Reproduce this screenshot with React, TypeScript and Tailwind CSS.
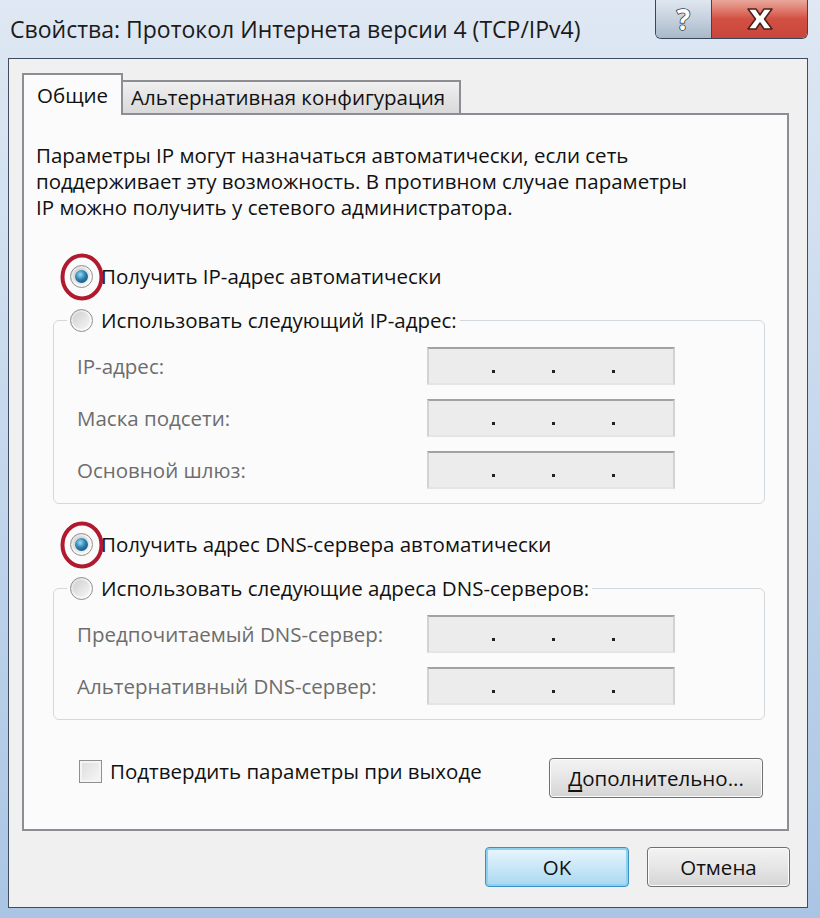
import type { ReactNode } from 'react';

function Radio({ checked, marked }: { checked?: boolean; marked?: boolean }) {
  return (
    <span className="relative inline-flex h-[23px] w-[23px] shrink-0 items-center justify-center rounded-full border border-[#8e8f8f] bg-gradient-to-br from-[#d9d9d9] via-[#f4f4f4] to-[#ffffff]">
      <span className="flex h-[17px] w-[17px] items-center justify-center rounded-full bg-gradient-to-br from-[#cfcfcf] to-[#f7f7f7]">
        {checked && (
          <span className="h-[13px] w-[13px] rounded-full bg-[radial-gradient(circle_at_40%_35%,#9adcf5_0%,#2a7fb0_45%,#0f3f63_100%)]" />
        )}
      </span>
      {marked && (
        <svg
          className="pointer-events-none absolute left-[-11px] top-[-13px] h-[48px] w-[44px]"
          viewBox="0 0 44 48"
          aria-hidden
        >
          <ellipse
            cx="22"
            cy="24"
            rx="19.5"
            ry="21.5"
            fill="none"
            stroke="#b11a2e"
            strokeWidth="4"
          />
        </svg>
      )}
    </span>
  );
}

function IpField() {
  return (
    <div className="flex h-[38px] w-[248px] items-end gap-[57px] border-2 border-t-[#a2a2a2] border-x-[#d2d2d2] border-b-[#e4e4e4] bg-[#ececec] pb-[10px] pl-[63px]">
      <span className="h-[3px] w-[3px] bg-[#222]" />
      <span className="h-[3px] w-[3px] bg-[#222]" />
      <span className="h-[3px] w-[3px] bg-[#222]" />
    </div>
  );
}

function FieldRow({ label }: { label: string }) {
  return (
    <div className="flex items-center">
      <span className="w-[350px] text-[20.5px] leading-[26px] text-[#6d6d6d]">{label}</span>
      <IpField />
    </div>
  );
}

function Group({ legend, children }: { legend: ReactNode; children: ReactNode }) {
  return (
    <fieldset className="ml-[17px] w-[712px] rounded-[6px] border border-[#d3d8dc] pl-[13px] pr-[89px]">
      <legend className="px-[3px]">{legend}</legend>
      <div className="flex flex-col gap-[14px] pb-[14px] pl-[10px] pt-[14px]">{children}</div>
    </fieldset>
  );
}

function RadioLabel({ checked, marked, children }: { checked?: boolean; marked?: boolean; children: ReactNode }) {
  return (
    <div className="flex items-center gap-[8px]">
      <Radio checked={checked} marked={marked} />
      <span className="text-[20.5px] leading-[26px] text-[#111]">{children}</span>
    </div>
  );
}

function Button({ children, primary, className }: { children: ReactNode; primary?: boolean; className?: string }) {
  return (
    <button
      type="button"
      className={
        'flex h-[40px] items-center justify-center rounded-[4px] border text-[20.5px] text-[#111] ' +
        (primary
          ? 'border-[#3c8fc4] bg-gradient-to-b from-[#eaf6fd] via-[#c9e7f7] to-[#a7d8f1] shadow-[inset_0_0_0_2px_#8fd0ef] '
          : 'border-[#707070] bg-gradient-to-b from-[#f3f3f3] via-[#e6e6e6] to-[#d4d4d4] shadow-[inset_0_0_0_1px_#fcfcfc] ') +
        (className ?? '')
      }
    >
      {children}
    </button>
  );
}

export default function App() {
  return (
    <div className="relative h-[918px] w-[820px] overflow-hidden bg-gradient-to-b from-[#dfe8f3] via-[#c4d7ec] to-[#aac5e4] font-['Open_Sans',sans-serif]">
      {/* title bar */}
      <div className="flex h-[58px] items-start justify-between pl-[10px] pr-[12px]">
        <span className="pt-[14px] text-[23px] leading-[30px] text-[#1b1b1b]">
          Свойства: Протокол Интернета версии 4 (TCP/IPv4)
        </span>
        <div className="flex h-[39px] overflow-hidden rounded-b-[6px] border border-t-0 border-[#39475a]">
          <div className="flex w-[56px] items-center justify-center border-r border-[#39475a] bg-gradient-to-b from-[#dfe6ef] via-[#c6d1de] to-[#a9b8ca]">
            <span className="text-[28px] font-bold leading-none text-white [-webkit-text-stroke:1.5px_#2d3440] [paint-order:stroke]">
              ?
            </span>
          </div>
          <div className="flex w-[95px] items-center justify-center bg-gradient-to-b from-[#e9a79c] via-[#d24f43] to-[#c8463b]">
            <svg width="32" height="26" viewBox="0 0 32 26" aria-hidden>
              <path
                d="M4 3 L12 3 L16 9 L20 3 L28 3 L20.5 13 L28 23 L20 23 L16 17 L12 23 L4 23 L11.5 13 Z"
                fill="#fff"
                stroke="#4a1f1a"
                strokeWidth="1.5"
                strokeLinejoin="round"
              />
            </svg>
          </div>
        </div>
      </div>

      {/* client area */}
      <div className="ml-[8px] flex h-[850px] w-[800px] flex-col border border-[#3e4d5f] bg-[#f0f0f0]">
        <div className="pl-[13px] pt-[14px]">
          {/* tabs */}
          <div className="flex items-end">
            <div className="relative z-10 -mb-[2px] flex h-[42px] w-[101px] items-center border-2 border-b-0 border-[#8c8e94] bg-[#fbfbfb] pl-[13px] text-[20.5px] text-[#111]">
              Общие
            </div>
            <div className="flex h-[33px] w-[338px] items-center border-2 border-b-0 border-l-0 border-[#8c8e94] bg-gradient-to-b from-[#f0f0f0] to-[#d9d9d9] pl-[8px] text-[20.5px] text-[#111]">
              Альтернативная конфигурация
            </div>
          </div>

          {/* panel */}
          <div className="flex h-[718px] w-[767px] flex-col border-2 border-[#8c8e94] bg-[#fbfbfb] pl-[12px] pt-[27px]">
            <p className="text-[20.5px] leading-[26px] text-[#111]">
              Параметры IP могут назначаться автоматически, если сеть
              <br />
              поддерживает эту возможность. В противном случае параметры
              <br />
              IP можно получить у сетевого администратора.
            </p>

            <div className="ml-[34px] mt-[43px]">
              <RadioLabel checked marked>
                Получить IP-адрес автоматически
              </RadioLabel>
            </div>

            <div className="mt-[18px]">
              <Group legend={<RadioLabel>Использовать следующий IP-адрес:</RadioLabel>}>
                <FieldRow label="IP-адрес:" />
                <FieldRow label="Маска подсети:" />
                <FieldRow label="Основной шлюз:" />
              </Group>
            </div>

            <div className="ml-[34px] mt-[27px]">
              <RadioLabel checked marked>
                Получить адрес DNS-сервера автоматически
              </RadioLabel>
            </div>

            <div className="mt-[18px]">
              <Group legend={<RadioLabel>Использовать следующие адреса DNS-серверов:</RadioLabel>}>
                <FieldRow label="Предпочитаемый DNS-сервер:" />
                <FieldRow label="Альтернативный DNS-сервер:" />
              </Group>
            </div>

            <div className="mt-[38px] flex items-start justify-between pr-[24px]">
              <div className="ml-[43px] flex items-center gap-[8px]">
                <span className="h-[23px] w-[23px] border border-[#8f8f8f] bg-gradient-to-br from-[#dcdcdc] to-[#f8f8f8] shadow-[inset_0_0_0_2px_#f4f4f4]" />
                <span className="text-[20.5px] leading-[26px] text-[#111]">Подтвердить параметры при выходе</span>
              </div>
              <Button className="w-[214px]">
                <span>
                  <span className="underline underline-offset-4">Д</span>ополнительно...
                </span>
              </Button>
            </div>
          </div>
        </div>

        {/* bottom buttons */}
        <div className="mt-[16px] flex justify-end gap-[18px] pr-[17px]">
          <Button primary className="w-[144px]">
            OK
          </Button>
          <Button className="w-[143px]">Отмена</Button>
        </div>
      </div>
    </div>
  );
}
